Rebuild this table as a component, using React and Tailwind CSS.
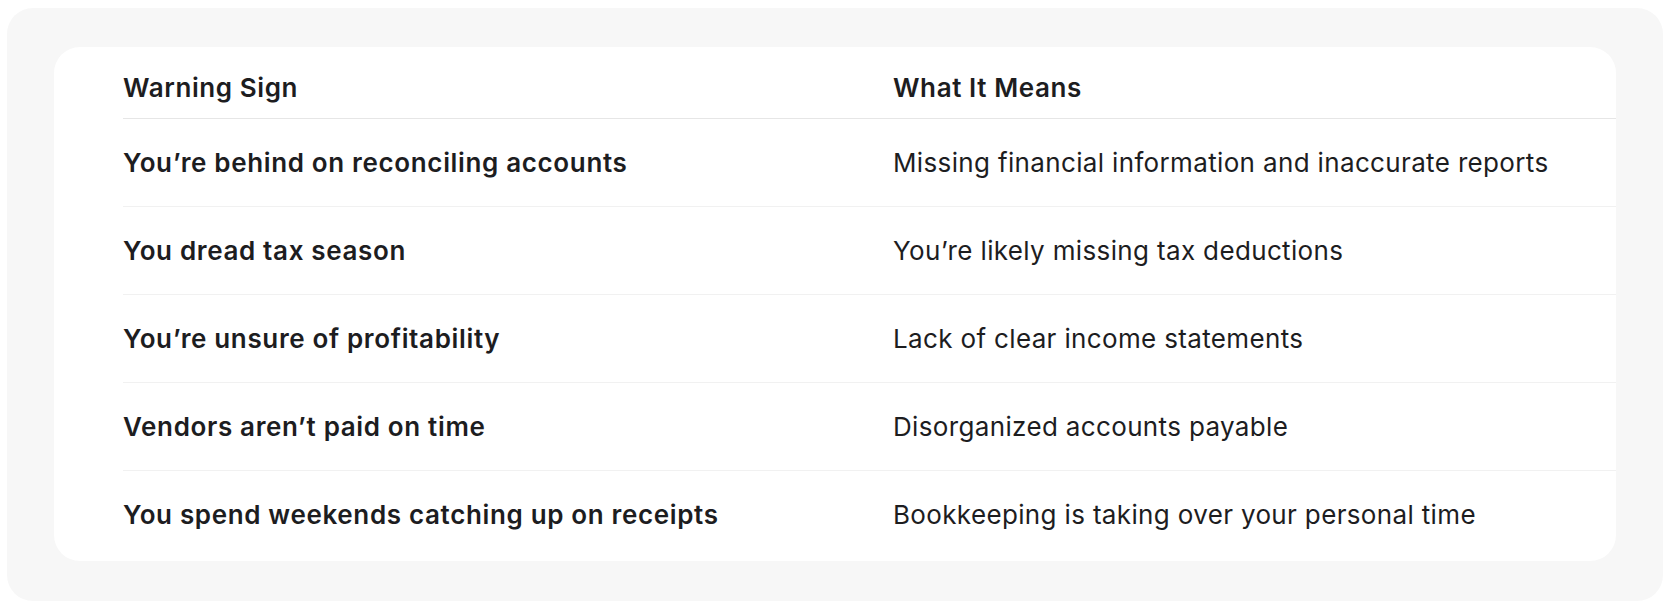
const ROWS = [
  ['You’re behind on reconciling accounts', 'Missing financial information and inaccurate reports'],
  ['You dread tax season', 'You’re likely missing tax deductions'],
  ['You’re unsure of profitability', 'Lack of clear income statements'],
  ['Vendors aren’t paid on time', 'Disorganized accounts payable'],
  ['You spend weekends catching up on receipts', 'Bookkeeping is taking over your personal time'],
]

export default function App() {
  return (
    <div className="min-h-screen bg-white pl-[7px] pr-[10px] pt-[8px] pb-[5px] font-['Inter','Liberation_Sans',sans-serif] text-[#1d1d1f]">
      <div className="rounded-[26px] bg-[#f7f7f7] pt-[39px] pb-[40px] pl-[47px] pr-[47px]">
        <div className="rounded-[26px] bg-white pt-[10px] pb-[3px] pl-[69px]">
          <div className="grid grid-cols-[770px_1fr] h-[61px] items-center text-[26px] font-semibold tracking-[0.6px]">
            <div>Warning Sign</div>
            <div>What It Means</div>
          </div>
          {ROWS.map(([sign, meaning], i) => (
            <div
              key={sign}
              className={`grid grid-cols-[770px_1fr] h-[88px] items-center border-t text-[26px] ${
                i === 0 ? 'border-[#e6e6e6]' : 'border-[#f1f1f1]'
              }`}
            >
              <div className="font-semibold tracking-[0.65px]">{sign}</div>
              <div className="tracking-[0.35px]">{meaning}</div>
            </div>
          ))}
        </div>
      </div>
    </div>
  )
}
